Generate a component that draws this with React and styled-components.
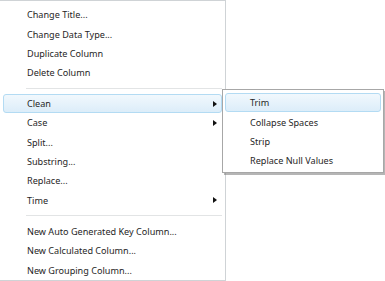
import React from 'react';
import styled, { createGlobalStyle } from 'styled-components';

// ----- globalne -----

const Global = createGlobalStyle`
    html, body {
        margin: 0;
        padding: 0;
        background: #ffffff;
    }
    body {
        font-family: "Noto Sans", "Open Sans", sans-serif;
        font-size: 9.1px;
        color: #262626;
    }
`

// ----- style -----

const Stage = styled.div`
    position: relative;
    width: 385px;
    height: 281px;
    overflow: hidden;
`

const Menu = styled.div`
    display: flex;
    flex-direction: column;
    box-sizing: border-box;
    width: 227px;
    height: 281px;
    margin-left: -1px;
    padding: 4.3px 3px 0 3px;
    background: #ffffff;
    border: 1px solid #cfd3d6;
`

const SubMenu = styled.div`
    position: absolute;
    left: 222px;
    top: 89px;
    width: 162px;
    box-sizing: border-box;
    display: flex;
    flex-direction: column;
    padding: 3px 2px 1px 2px;
    background: #ffffff;
    border: 1px solid #a7a7a7;
    box-shadow: 2px 2px 0 rgba(120, 120, 120, 0.55);
`

const Item = styled.div`
    position: relative;
    display: flex;
    align-items: center;
    box-sizing: border-box;
    height: 19.4px;
    padding-left: ${p => p.$indent}px;
    border: 1px solid transparent;
    border-radius: 3px;
    white-space: nowrap;
    ${p => p.$active && `
        background: linear-gradient(#f1f8fd, #dcedf9);
        border-color: #b3dbf3;
    `}
`

const Arrow = styled.span`
    position: absolute;
    left: ${p => p.$at}px;
    top: 50%;
    margin-top: -3px;
    width: 0;
    height: 0;
    border-top: 3px solid transparent;
    border-bottom: 3px solid transparent;
    border-left: 4px solid #111;
`

const Separator = styled.div`
    height: ${p => p.$h}px;
    display: flex;
    align-items: center;
    padding-left: 23px;

    &::after {
        content: '';
        flex: 1;
        height: 1px;
        background: #e2e4e5;
        box-shadow: 0 1px 0 #ffffff;
    }
`

// ----- dane -----

const top = ['Change Title...', 'Change Data Type...', 'Duplicate Column', 'Delete Column']
const middle = [
    { label: 'Clean', sub: true, active: true },
    { label: 'Case', sub: true },
    { label: 'Split...' },
    { label: 'Substring...' },
    { label: 'Replace...' },
    { label: 'Time', sub: true },
]
const bottom = ['New Auto Generated Key Column...', 'New Calculated Column...', 'New Grouping Column...']
const cleanItems = ['Trim', 'Collapse Spaces', 'Strip', 'Replace Null Values']

// ----- komponent -----

export default function App() {
    return (
        <Stage>
            <Global />
            <Menu>
                {top.map(t => <Item key={t} $indent={23}>{t}</Item>)}
                <Separator $h={11.4} />
                {middle.map(m => (
                    <Item key={m.label} $indent={23} $active={m.active}>
                        {m.label}
                        {m.sub && <Arrow $at={209} />}
                    </Item>
                ))}
                <Separator $h={12.3} />
                {bottom.map(t => <Item key={t} $indent={23}>{t}</Item>)}
            </Menu>
            <SubMenu>
                {cleanItems.map((t, i) => (
                    <Item key={t} $indent={24} $active={i === 0}>{t}</Item>
                ))}
            </SubMenu>
        </Stage>
    );
}
